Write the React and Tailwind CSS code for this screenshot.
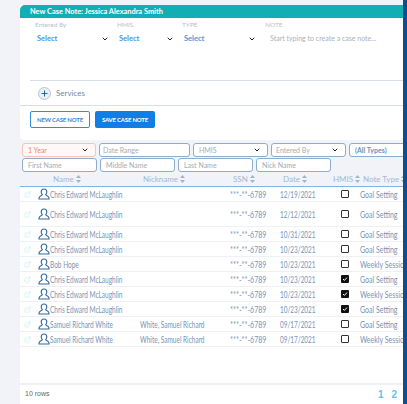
import React from 'react';
import { ChevronDown, ExternalLink, Plus } from 'lucide-react';

const rows = [
    { name: 'Chris Edward McLaughlin', nick: '', date: '12/19/2021', hmis: false, type: 'Goal Setting', h: 'h-[15px]' },
    { name: 'Chris Edward McLaughlin', nick: '', date: '12/12/2021', hmis: false, type: 'Goal Setting', h: 'h-[25px]' },
    { name: 'Chris Edward McLaughlin', nick: '', date: '10/31/2021', hmis: false, type: 'Goal Setting', h: 'h-[15px]' },
    { name: 'Chris Edward McLaughlin', nick: '', date: '10/23/2021', hmis: false, type: 'Goal Setting', h: 'h-[15px]' },
    { name: 'Bob Hope', nick: '', date: '10/23/2021', hmis: false, type: 'Weekly Session', h: 'h-[15px]' },
    { name: 'Chris Edward McLaughlin', nick: '', date: '10/23/2021', hmis: true, type: 'Goal Setting', h: 'h-[15px]' },
    { name: 'Chris Edward McLaughlin', nick: '', date: '10/23/2021', hmis: true, type: 'Weekly Session', h: 'h-[15px]' },
    { name: 'Chris Edward McLaughlin', nick: '', date: '10/23/2021', hmis: true, type: 'Goal Setting', h: 'h-[15px]' },
    { name: 'Samuel Richard White', nick: 'White, Samuel Richard', date: '09/17/2021', hmis: false, type: 'Goal Setting', h: 'h-[15px]' },
    { name: 'Samuel Richard White', nick: 'White, Samuel Richard', date: '09/17/2021', hmis: false, type: 'Weekly Session', h: 'h-[15px]' },
];

function SortIcon() {
    return (
        <svg width="5" height="8" viewBox="0 0 5 8" className="ml-[2px] shrink-0">
            <path d="M2.5 0L5 3H0z M2.5 8L0 5h5z" fill="#9db6cf" />
        </svg>
    );
}

function PersonIcon() {
    return (
        <svg width="12" height="12" viewBox="0 0 12 12" className="ml-[7px] shrink-0" fill="none" stroke="#2f689f" strokeWidth="1.1">
            <path d="M6 1C4.2 1 3.2 2.4 3.2 4C3.2 5.2 3.8 6 4.4 6.6C4.4 7.4 1 7.8 1 10V11H11V10C11 7.8 7.6 7.4 7.6 6.6C8.2 6 8.8 5.2 8.8 4C8.8 2.4 7.8 1 6 1Z" />
        </svg>
    );
}

function FormSelect({ label, width }) {
    return (
        <div className={`${width} shrink-0`}>
            <div className="text-[6.5px] leading-[9px] text-[#b3bfce] pl-[5px]">{label}</div>
            <div className="flex items-center justify-between mt-[4px] pl-[7px] pr-[3px]">
                <span className="text-[7.5px] font-bold text-[#4a96e4]">Select</span>
                <ChevronDown className="w-[8px] h-[8px] text-[#222]" strokeWidth={3} />
            </div>
        </div>
    );
}

function Filter({ children, className, chevron, red }) {
    return (
        <div className={`h-[14px] rounded-[3px] border flex items-center justify-between pl-[5px] pr-[6px] text-[7px] shrink-0 ${red ? 'border-[#f9c3b6] text-[#f0866c] bg-[#fff8f6]' : 'border-[#8eaccb] text-[#a3acb6] bg-white'} ${className}`}>
            <span className="whitespace-nowrap">{children}</span>
            {chevron && <ChevronDown className="w-[8px] h-[8px] text-[#222] shrink-0" strokeWidth={3} />}
        </div>
    );
}

function HeadCell({ children, className }) {
    return (
        <div className={`flex items-center text-[8px] text-[#a3b8d1] shrink-0 ${className}`}>
            {children}
            <SortIcon />
        </div>
    );
}

function Squeezed({ children, width, scale }) {
    return (
        <span className={`${width} shrink-0 block`}>
            <span className={`inline-block origin-left ${scale}`}>{children}</span>
        </span>
    );
}

function App() {
    return (
        <div className="h-[404px] w-[407px] flex bg-[#f1f3f8] overflow-hidden" style={{ fontFamily: 'Lato, sans-serif' }}>
            <div className="w-[403px] shrink-0 pl-[20px] pt-[5px] flex flex-col">
                {/* New case note card */}
                <div className="h-[135px] bg-white rounded-b-[4px] shrink-0 flex flex-col">
                    <div className="h-[13px] bg-[#13aeb4] rounded-tl-[5px] pl-[10px] flex items-center text-[7.4px] font-bold text-white shrink-0">
                        New Case Note: Jessica Alexandra Smith
                    </div>
                    <div className="flex pl-[10px] pt-[2px] h-[62px] shrink-0">
                        <FormSelect label="Entered By" width="w-[82px]" />
                        <FormSelect label="HMIS" width="w-[65px]" />
                        <FormSelect label="TYPE" width="w-[82px]" />
                        <div className="pl-[6px]">
                            <div className="text-[6.5px] leading-[9px] text-[#b3bfce]">NOTE</div>
                            <div className="text-[7px] mt-[4px] leading-[10px] pl-[5px] text-[#aab2bc] whitespace-nowrap">Start typing to create a case note...</div>
                        </div>
                    </div>
                    <div className="ml-[10px] border-t border-[#d3e0ec] h-[25px] flex items-center pl-[8px] shrink-0">
                        <div className="w-[13px] h-[13px] rounded-full border border-[#b9c6d4] bg-[#eaf0f6] flex items-center justify-center">
                            <Plus className="w-[9px] h-[9px] text-[#1f5f99]" strokeWidth={2.5} />
                        </div>
                        <span className="text-[8px] text-[#6f8aa3] ml-[5px]">Services</span>
                    </div>
                    <div className="border-t border-[#d3e0ec] flex gap-[5px] pl-[10px] pt-[5px]">
                        <div className="w-[60px] h-[17px] border border-[#2f8ae6] rounded-[2px] flex items-center justify-center text-[6px] tracking-[-0.2px] font-bold text-[#2f8ae6]">NEW CASE NOTE</div>
                        <div className="w-[60px] h-[17px] bg-[#0f7fe6] rounded-[2px] flex items-center justify-center text-[6px] tracking-[-0.2px] font-bold text-white">SAVE CASE NOTE</div>
                    </div>
                </div>

                {/* Filters */}
                <div className="pl-[2px] pt-[3px] flex flex-col gap-[1px] shrink-0">
                    <div className="flex gap-[3px]">
                        <Filter red chevron className="w-[74px]">1 Year</Filter>
                        <Filter className="w-[91px]"><span className="-ml-[2px]">Date Range</span></Filter>
                        <Filter chevron className="w-[75px]">HMIS</Filter>
                        <Filter chevron className="w-[75px]"><span className="-ml-px">Entered By</span></Filter>
                        <Filter className="w-[75px]"><span className="font-bold text-[#6f8fb3]">(All Types)</span></Filter>
                    </div>
                    <div className="flex gap-[3px]">
                        <Filter className="w-[75px]">First Name</Filter>
                        <Filter className="w-[75px]">Middle Name</Filter>
                        <Filter className="w-[75px]">Last Name</Filter>
                        <Filter className="w-[75px]">Nick Name</Filter>
                    </div>
                </div>

                {/* Table */}
                <div className="flex items-center h-[15px] border-b border-[#7fb6e6] pl-[33px] shrink-0">
                    <HeadCell className="w-[90px]">Name</HeadCell>
                    <HeadCell className="w-[90px]">Nickname</HeadCell>
                    <HeadCell className="w-[50px]">SSN</HeadCell>
                    <HeadCell className="w-[50px]">Date</HeadCell>
                    <HeadCell className="w-[30px]">HMIS</HeadCell>
                    <HeadCell>Note Type</HeadCell>
                </div>
                <div className="flex-1 min-h-0 flex flex-col bg-white overflow-hidden">
                    {rows.map((row, i) => (
                        <div key={i} className={`flex items-center ${row.h} border-b border-[#eef0f3] shrink-0 text-[10px] text-[#7595b8] whitespace-nowrap`}>
                            <ExternalLink className="w-[7px] h-[7px] text-[#c2ecf2] ml-[4px] shrink-0" strokeWidth={2} />
                            <PersonIcon />
                            <Squeezed width="w-[90px]" scale="scale-x-[0.65]">{row.name}</Squeezed>
                            <Squeezed width="w-[90px]" scale="scale-x-[0.65]">{row.nick}</Squeezed>
                            <Squeezed width="w-[50px]" scale="scale-x-[0.7]">***-**-6789</Squeezed>
                            <Squeezed width="w-[61px]" scale="scale-x-[0.64]">{row.date}</Squeezed>
                            <span className="w-[19px] shrink-0">
                                {row.hmis ? (
                                    <span className="w-[8px] h-[8px] rounded-[1px] bg-[#111] flex items-center justify-center">
                                        <svg width="6" height="6" viewBox="0 0 6 6"><path d="M1 3l1.4 1.4L5 1.6" fill="none" stroke="#fff" strokeWidth="1" /></svg>
                                    </span>
                                ) : (
                                    <span className="block w-[8px] h-[8px] rounded-[1px] border border-[#333] bg-white"></span>
                                )}
                            </span>
                            <Squeezed width="w-[43px]" scale="scale-x-[0.7]">{row.type}</Squeezed>
                        </div>
                    ))}
                    <div className="flex-1 min-h-0"></div>
                    <div className="h-[21px] border-t-2 border-[#f0f1f4] flex items-center justify-between pl-[5px] pr-[6px] shrink-0">
                        <span className="text-[7px] text-[#666]" style={{ fontFamily: '"Liberation Sans", sans-serif' }}>10 rows</span>
                        <div className="flex gap-[8px] text-[10px] font-bold text-[#5cc4ee]" style={{ fontFamily: '"Liberation Sans", sans-serif' }}>
                            <span>1</span>
                            <span>2</span>
                        </div>
                    </div>
                </div>
            </div>
            <div className="w-[4px] shrink-0 bg-[#0f4d8c]"></div>
        </div>
    );
}

export default App;
